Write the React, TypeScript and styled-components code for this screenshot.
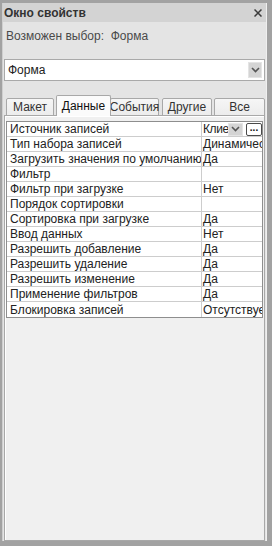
import React from "react";
import styled, { createGlobalStyle } from "styled-components";

const Global = createGlobalStyle`
  html, body { margin: 0; padding: 0; background: #9d9d9d; }
  * { box-sizing: border-box; }
`;

const Frame = styled.div`
  width: 272px;
  height: 546px;
  background: #a2a2a2;
  padding: 3px 5px 5px 2px;
  display: flex;
  font-family: "Liberation Sans", Arial, sans-serif;
`;

const Window = styled.div`
  flex: 1;
  display: flex;
  flex-direction: column;
  background: #e4e4e4;
  border-left: 1px solid #cfcfcf;
  border-right: 1px solid #efefef;
`;

const TitleBar = styled.div`
  height: 19px;
  background: #d3d3d3;
  display: flex;
  align-items: center;
  justify-content: space-between;
  padding: 0 4px 0 1px;
`;

const Title = styled.span`
  font-weight: bold;
  font-size: 12px;
  color: #333;
`;

const Info = styled.div`
  margin-top: 7px;
  padding-left: 3px;
  font-size: 12px;
  line-height: 14px;
  color: #4a4a4a;
  white-space: pre;
`;

const Combo = styled.div`
  margin: 16px 0 0 1px;
  width: 261px;
  height: 22px;
  background: #fff;
  border: 1px solid #a9a9a9;
  display: flex;
  align-items: center;
  justify-content: space-between;
  padding: 0 2px 0 3px;
  font-size: 12px;
  color: #222;
`;

const DropButton = styled.div<{ $w: number; $h: number }>`
  flex: 0 0 ${(p) => p.$w}px;
  width: ${(p) => p.$w}px;
  height: ${(p) => p.$h}px;
  background: #d4d4d4;
  border: 1px solid #e4e4e4;
  display: flex;
  align-items: center;
  justify-content: center;
`;

const TabRow = styled.div`
  margin-top: 13px;
  height: 22px;
  display: flex;
  align-items: flex-end;
  padding-left: 2px;
`;

const Tab = styled.div<{ $w: number; $active?: boolean; $ml: number }>`
  width: ${(p) => p.$w}px;
  margin-left: ${(p) => p.$ml}px;
  height: ${(p) => (p.$active ? 21 : 18)}px;
  background: ${(p) =>
    p.$active ? "#fbfbfb" : "linear-gradient(#f6f6f6, #ececec)"};
  border: 1px solid #a8a8a8;
  border-bottom: ${(p) => (p.$active ? "none" : "1px solid #a8a8a8")};
  border-radius: 2px 2px 0 0;
  display: flex;
  align-items: center;
  justify-content: center;
  font-size: 12px;
  color: ${(p) => (p.$active ? "#111" : "#333")};
  position: relative;
  z-index: ${(p) => (p.$active ? 1 : 0)};
`;

const Panel = styled.div`
  flex: 1;
  margin: -1px 0 0 1px;
  width: 261px;
  background: #f0f0f0;
  border: 1px solid #a8a8a8;
  box-shadow: inset 1px 1px 0 #fff;
  padding: 5px 1px 0 1px;
`;

const Grid = styled.div`
  border: 1px solid #8e8e8e;
  background: #fff;
  width: 257px;
`;

const Row = styled.div`
  height: 15px;
  display: grid;
  grid-template-columns: 194px 1fr;
  border-bottom: 1px solid #cdcdcd;
  &:last-child { border-bottom: none; }
`;

const Cell = styled.div<{ $value?: boolean }>`
  font-size: 12px;
  line-height: 14px;
  color: #222;
  padding-left: ${(p) => (p.$value ? 1 : 3)}px;
  white-space: nowrap;
  overflow: hidden;
  border-left: ${(p) => (p.$value ? "1px solid #cdcdcd" : "none")};
  display: flex;
  align-items: center;
  min-width: 0;
`;

const ValueText = styled.span`
  flex: 1;
  min-width: 0;
  overflow: hidden;
  letter-spacing: -0.4px;
`;

const EllipsisButton = styled.div`
  flex: 0 0 16px;
  margin-left: 3px;
  height: 13px;
  border: 1px solid #4a4a4a;
  border-radius: 2px;
  background: #fff;
  font-size: 10px;
  line-height: 8px;
  font-weight: bold;
  text-align: center;
  color: #111;
  display: flex;
  justify-content: center;
`;

const Chevron = () => (
  <svg width="9" height="6" viewBox="0 0 9 6">
    <path d="M1 1 L4.5 4.5 L8 1" fill="none" stroke="#555" strokeWidth="1.6" />
  </svg>
);

const CloseIcon = () => (
  <svg width="8" height="8" viewBox="0 0 8 8">
    <path d="M0.5 0.5 L7.5 7.5 M7.5 0.5 L0.5 7.5" stroke="#3a3a3a" strokeWidth="1.5" />
  </svg>
);

const rows: [string, string][] = [
  ["Источник записей", "Клие"],
  ["Тип набора записей", "Динамический набор"],
  ["Загрузить значения по умолчанию", "Да"],
  ["Фильтр", ""],
  ["Фильтр при загрузке", "Нет"],
  ["Порядок сортировки", ""],
  ["Сортировка при загрузке", "Да"],
  ["Ввод данных", "Нет"],
  ["Разрешить добавление", "Да"],
  ["Разрешить удаление", "Да"],
  ["Разрешить изменение", "Да"],
  ["Применение фильтров", "Да"],
  ["Блокировка записей", "Отсутствует"],
];

const tabs = [
  { label: "Макет", w: 48, ml: 1 },
  { label: "Данные", w: 55, ml: 2, active: true },
  { label: "События", w: 49, ml: -1 },
  { label: "Другие", w: 50, ml: 3 },
  { label: "Все", w: 51, ml: 2 },
];

export default function App() {
  return (
    <>
      <Global />
      <Frame>
        <Window>
          <TitleBar>
            <Title>Окно свойств</Title>
            <CloseIcon />
          </TitleBar>
          <Info>{"Возможен выбор:  Форма"}</Info>
          <Combo>
            <span>Форма</span>
            <DropButton $w={14} $h={16}>
              <Chevron />
            </DropButton>
          </Combo>
          <TabRow>
            {tabs.map((t) => (
              <Tab key={t.label} $w={t.w} $ml={t.ml} $active={t.active}>
                {t.label}
              </Tab>
            ))}
          </TabRow>
          <Panel>
            <Grid>
              {rows.map(([k, v], i) => (
                <Row key={k}>
                  <Cell>{k}</Cell>
                  {i === 0 ? (
                    <Cell $value>
                      <ValueText>{v}</ValueText>
                      <DropButton $w={15} $h={13}>
                        <Chevron />
                      </DropButton>
                      <EllipsisButton>...</EllipsisButton>
                    </Cell>
                  ) : (
                    <Cell $value>{v}</Cell>
                  )}
                </Row>
              ))}
            </Grid>
          </Panel>
        </Window>
      </Frame>
    </>
  );
}
